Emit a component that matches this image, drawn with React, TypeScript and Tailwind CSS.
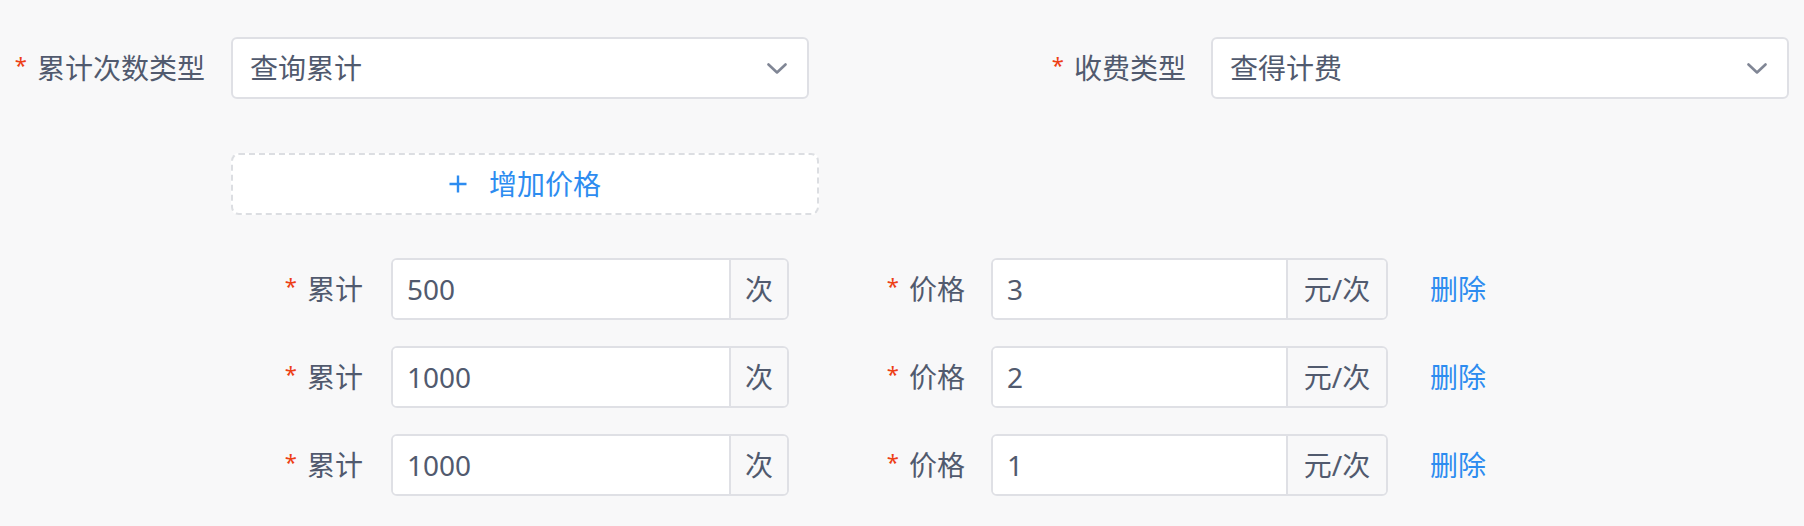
import React from "react"

const FONT = { fontFamily: '"Noto Sans", "Noto Sans CJK SC", sans-serif' }

function Required({ children }: { children: React.ReactNode }) {
  return (
    <span className="flex items-center text-[28px] leading-none text-[#515a6e]">
      <span className="mr-[10px] -mt-[8px] text-[22px] text-[#ed4014]">*</span>
      {children}
    </span>
  )
}

function Chevron() {
  return (
    <svg width="20" height="11" viewBox="0 0 20 11" fill="none">
      <path d="M1.5 1.5 L10 9.5 L18.5 1.5" stroke="#808695" strokeWidth="2.6" strokeLinecap="round" strokeLinejoin="round" />
    </svg>
  )
}

function SelectBox({ value }: { value: string }) {
  return (
    <div className="flex h-[62px] w-[578px] items-center justify-between rounded-[6px] border-2 border-[#dfe0e5] bg-white pl-[17px] pr-[20px]">
      <span className="text-[28px] text-[#515a6e]">{value}</span>
      <Chevron />
    </div>
  )
}

function AddonInput({ value, unit, width, unitWidth }: { value: string; unit: string; width: string; unitWidth: string }) {
  return (
    <div className={`flex h-[62px] ${width} overflow-hidden rounded-[6px] border-2 border-[#dfe0e5] bg-white`}>
      <input
        readOnly
        value={value}
        className="min-w-0 flex-1 bg-white pl-[14px] text-[28px] text-[#515a6e] outline-none"
      />
      <div className={`flex ${unitWidth} items-center justify-center border-l-2 border-[#dfe0e5] bg-[#f8f8f9] text-[28px] text-[#515a6e]`}>
        {unit}
      </div>
    </div>
  )
}

const rows = [
  { count: "500", price: "3" },
  { count: "1000", price: "2" },
  { count: "1000", price: "1" },
]

export default function App() {
  return (
    <div className="min-h-screen bg-[#f8f8f9] pt-[37px]" style={FONT}>
      {/* top selects */}
      <div className="flex">
        <div className="flex w-[980px]">
          <div className="flex w-[231px] items-center justify-end pr-[26px]">
            <Required>累计次数类型</Required>
          </div>
          <SelectBox value="查询累计" />
        </div>
        <div className="flex">
          <div className="flex w-[231px] items-center justify-end pr-[25px]">
            <Required>收费类型</Required>
          </div>
          <SelectBox value="查得计费" />
        </div>
      </div>

      {/* add price */}
      <div className="mt-[54px] pl-[231px]">
        <button className="flex h-[62px] w-[588px] items-center justify-center gap-[22px] rounded-[8px] border-2 border-dashed border-[#dcdee2] bg-white text-[28px] text-[#2d8cf0]">
          <svg width="18" height="18" viewBox="0 0 18 18">
            <path d="M9 0.5 V17.5 M0.5 9 H17.5" stroke="#2d8cf0" strokeWidth="2.4" />
          </svg>
          <span>增加价格</span>
        </button>
      </div>

      {/* price rows */}
      <div className="mt-[43px] flex flex-col gap-[26px] pl-[231px]">
        {rows.map((r, i) => (
          <div key={i} className="flex items-center">
            <div className="flex w-[160px] items-center justify-end pr-[28px]">
              <Required>累计</Required>
            </div>
            <AddonInput value={r.count} unit="次" width="w-[398px]" unitWidth="w-[58px]" />
            <div className="flex w-[202px] items-center justify-end pr-[26px]">
              <Required>价格</Required>
            </div>
            <AddonInput value={r.price} unit="元/次" width="w-[397px]" unitWidth="w-[100px]" />
            <span className="ml-[42px] cursor-pointer text-[28px] text-[#2d8cf0]">删除</span>
          </div>
        ))}
      </div>
    </div>
  )
}
